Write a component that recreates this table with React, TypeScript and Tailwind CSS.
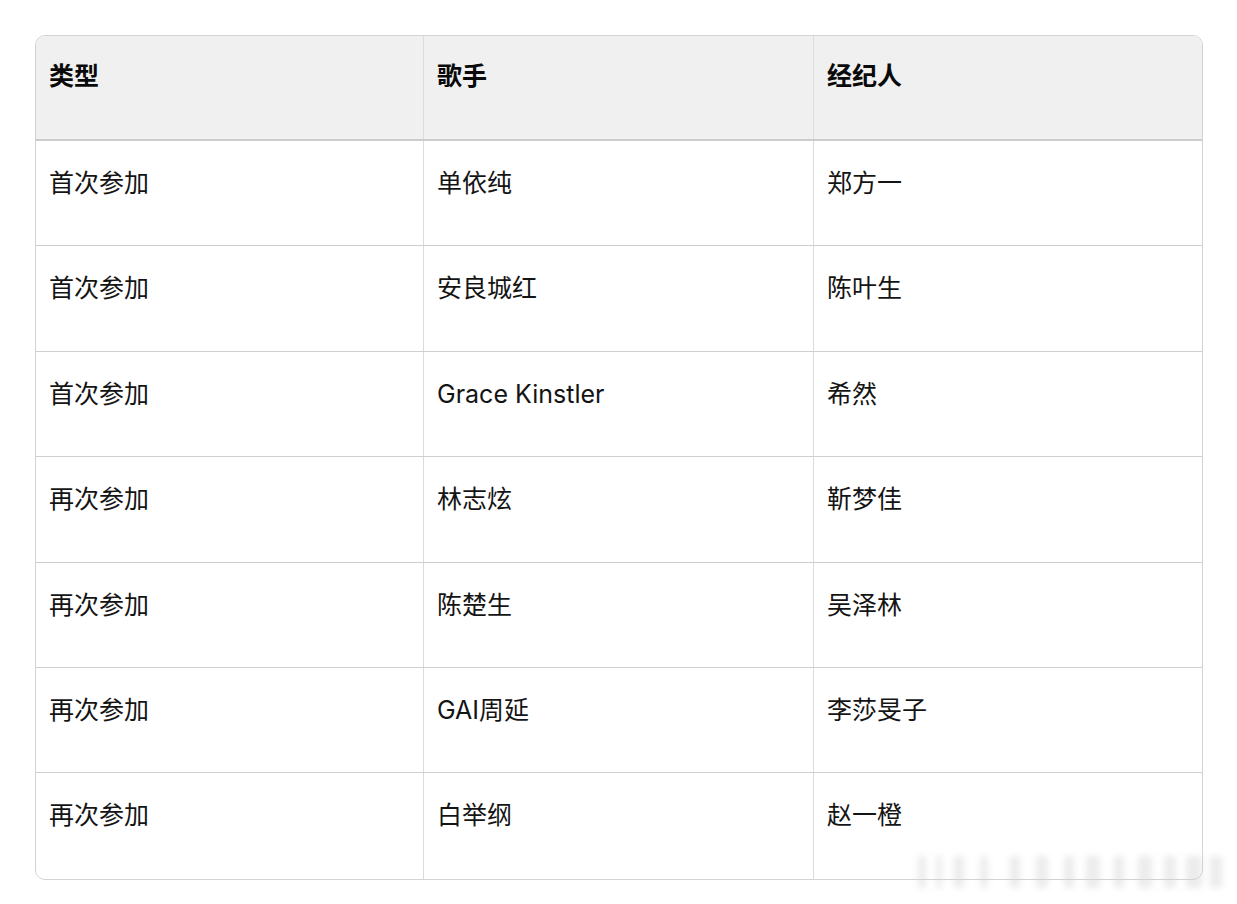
import React from "react";

const rows: [string, string, string][] = [
  ["首次参加", "单依纯", "郑方一"],
  ["首次参加", "安良城红", "陈叶生"],
  ["首次参加", "Grace Kinstler", "希然"],
  ["再次参加", "林志炫", "靳梦佳"],
  ["再次参加", "陈楚生", "吴泽林"],
  ["再次参加", "GAI周延", "李莎旻子"],
  ["再次参加", "白举纲", "赵一橙"],
];

const bars = [
  [0, 8], [18, 6], [36, 10], [62, 8], [92, 10], [118, 12], [146, 10], [168, 14], [196, 10], [220, 14], [246, 12], [268, 16], [292, 12],
];

export default function App() {
  return (
    <div
      className="relative w-[1237px] h-[904px] bg-white overflow-hidden"
      style={{ fontFamily: 'Inter, "Noto Sans CJK SC", sans-serif' }}
    >
      <div className="absolute left-[35px] top-[35px] w-[1168px] rounded-[10px] border border-[#d3d3d3] overflow-hidden">
        <div className="grid grid-cols-[388px_390px_1fr] bg-[#f0f0f0] border-b-2 border-[#cccccc] h-[105px]">
          {["类型", "歌手", "经纪人"].map((h, i) => (
            <div
              key={h}
              className={`pl-[13px] pt-[24px] text-[25px] leading-[33px] font-bold text-[#0a0a0a] ${i < 2 ? "border-r border-[#dcdcdc]" : ""}`}
            >
              {h}
            </div>
          ))}
        </div>
        {rows.map((r, ri) => (
          <div
            key={ri}
            className={`grid grid-cols-[388px_390px_1fr] h-[105.4px] ${ri < rows.length - 1 ? "border-b border-[#cfcfcf]" : ""}`}
          >
            {r.map((c, i) => (
              <div
                key={i}
                className={`pl-[13px] pt-[26px] text-[25px] leading-[33px] text-[#141414] ${i < 2 ? "border-r border-[#dcdcdc]" : ""}`}
              >
                {c}
              </div>
            ))}
          </div>
        ))}
      </div>
      <div className="absolute left-[918px] top-[852px] w-[312px] h-[40px] blur-[3px] opacity-40">
        {bars.map(([x, w], i) => (
          <div
            key={i}
            className="absolute top-[4px] h-[32px] bg-[#d0d0d0]"
            style={{ left: x, width: w }}
          />
        ))}
      </div>
    </div>
  );
}
